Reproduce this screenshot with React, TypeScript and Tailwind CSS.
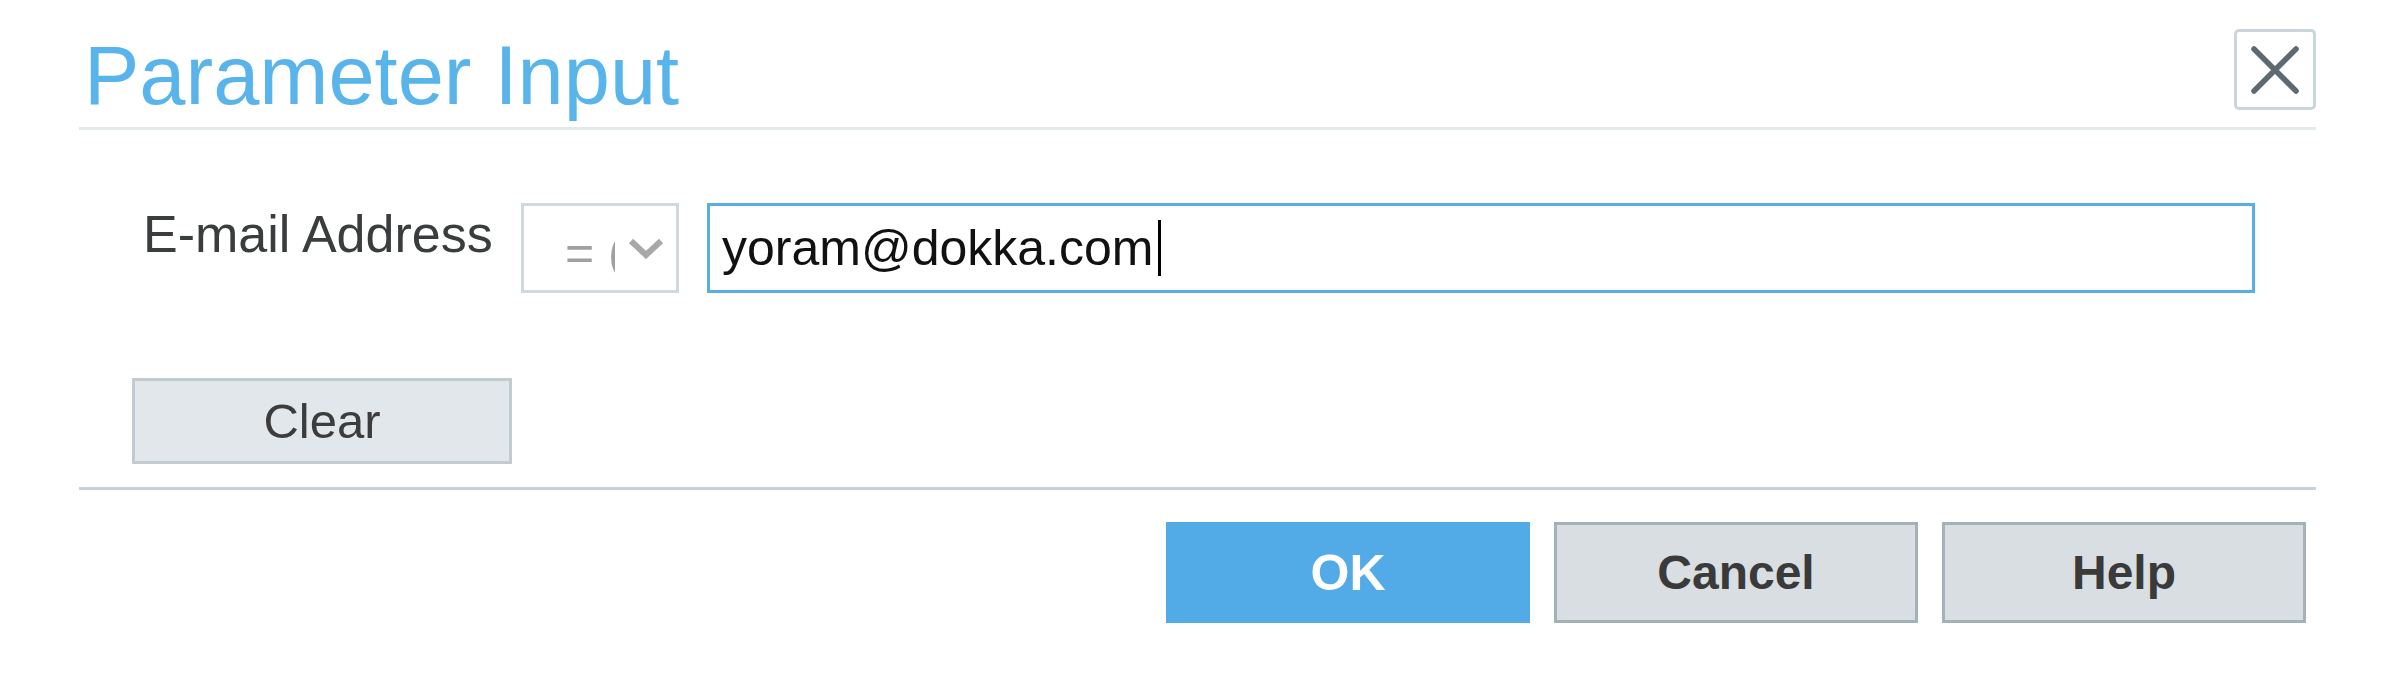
import { useState } from 'react';

const FONT = "font-['Liberation_Sans',Arial,sans-serif]";

export default function App() {
  const [email] = useState('yoram@dokka.com');

  return (
    <div className={`w-[2386px] h-[686px] bg-white overflow-hidden ${FONT}`}>
      <div className="ml-[79px] w-[2237px]">
        {/* header */}
        <div className="h-[130px] border-b-[3px] border-[#e2eaea] flex justify-between items-start">
          <h1 className="mt-[34px] pl-[5px] text-[83px] leading-none text-[#58b4ea] font-normal">
            Parameter Input
          </h1>
          <button className="mt-[29px] w-[82px] h-[81px] border-[3px] border-[#cad5dc] rounded-[5px] bg-white flex items-center justify-center">
            <svg width="52" height="52" viewBox="0 0 52 52">
              <path
                d="M5 5 L47 47 M47 5 L5 47"
                stroke="#5d6a72"
                strokeWidth="5.5"
                strokeLinecap="round"
              />
            </svg>
          </button>
        </div>

        {/* parameter row */}
        <div className="mt-[73px] pl-[64px] flex items-start">
          <label className="w-[378px] mt-[5px] text-[52px] leading-none text-[#3a3d3d]">
            E-mail Address
          </label>
          <div className="w-[158px] h-[90px] border-[3px] border-[#d0d9dd] bg-white flex items-center pl-[41px]">
            <span className="mt-[10px] w-[50px] overflow-hidden whitespace-nowrap text-[50px] leading-none text-[#a0a0a0]">
              = (
            </span>
            <svg
              className="ml-auto mr-[12px]"
              width="36"
              height="22"
              viewBox="0 0 36 22"
            >
              <path
                d="M3 4 L18 18 L33 4"
                fill="none"
                stroke="#a8a8a8"
                strokeWidth="6"
              />
            </svg>
          </div>
          <div className="ml-[28px] w-[1548px] h-[90px] border-[3px] border-[#5aaee8] bg-white flex items-center pl-[12px]">
            <span className="text-[50px] leading-none text-[#111]">{email}</span>
            <span className="ml-[5px] w-[3px] h-[56px] bg-black" />
          </div>
        </div>

        {/* clear */}
        <button className="mt-[85px] ml-[53px] w-[380px] h-[86px] border-[3px] border-[#c2cbcf] bg-[#e1e7ea] text-[49px] leading-none text-[#3c3c3c] flex items-center justify-center">
          Clear
        </button>

        <div className="mt-[23px] border-t-[3px] border-[#c8d1d5]" />

        {/* footer buttons */}
        <div className="mt-[32px] pr-[10px] flex justify-end gap-[24px]">
          <button className="w-[364px] h-[101px] bg-[#52aae6] text-white text-[50px] font-bold leading-none flex items-center justify-center">
            OK
          </button>
          <button className="w-[364px] h-[101px] border-[3px] border-[#a3b1b9] bg-[#d9dee2] text-[#3a3a3a] text-[48px] font-bold leading-none flex items-center justify-center">
            Cancel
          </button>
          <button className="w-[364px] h-[101px] border-[3px] border-[#a3b1b9] bg-[#d9dee2] text-[#3a3a3a] text-[48px] font-bold leading-none flex items-center justify-center">
            Help
          </button>
        </div>
      </div>
    </div>
  );
}
